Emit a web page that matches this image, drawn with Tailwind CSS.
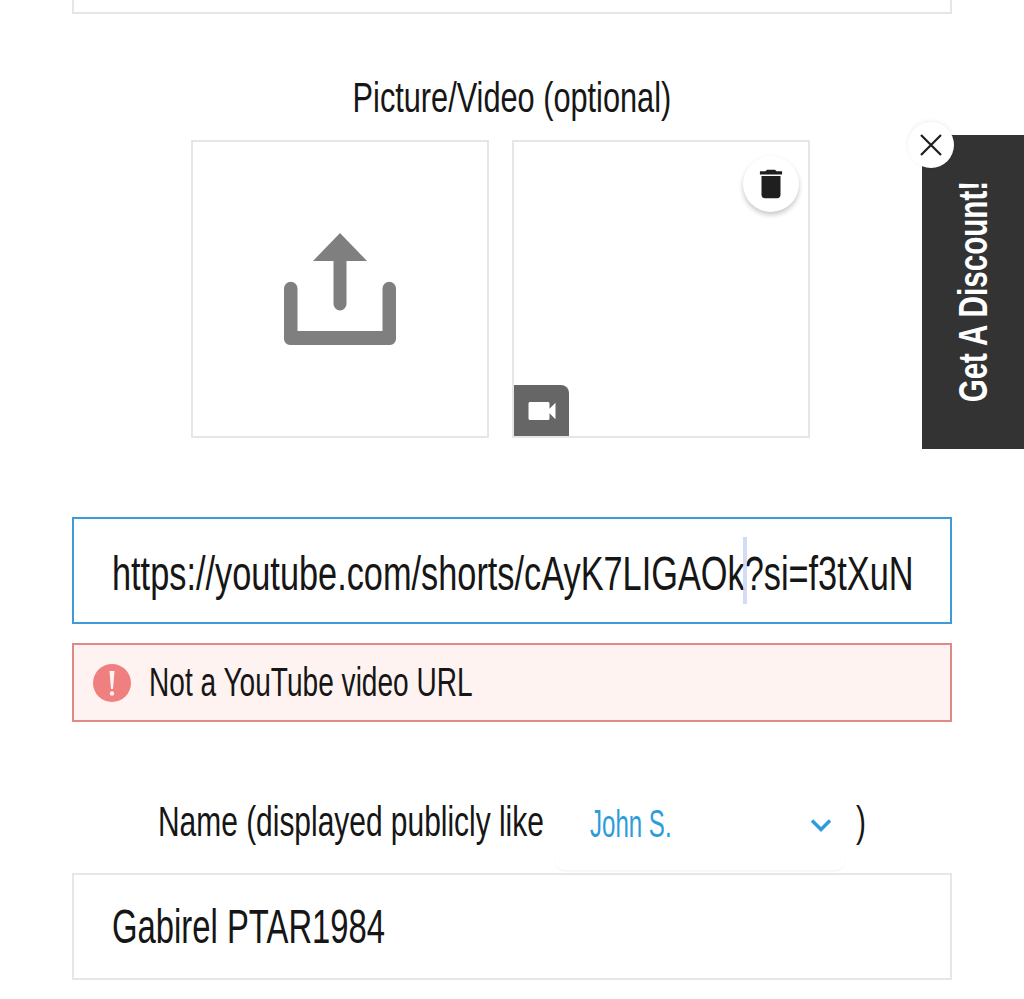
<!DOCTYPE html>
<html lang="en">
<head>
    <meta charset="UTF-8">
    <title>Picture/Video form</title>
    <script src="https://cdn.jsdelivr.net/npm/@tailwindcss/browser@4"></script>
</head>
<body class="bg-white">
    <div class="relative h-[999px] w-[1024px] overflow-hidden font-['Liberation_Sans',sans-serif] text-[#161616]">
        <div class="px-[72px]">
            <!-- Previous field, cut off by the top of the screen -->
            <div class="h-[14px] border-x-2 border-b-2 border-[#e4e6e8]"></div>

            <!-- Picture / video -->
            <div class="mt-[57px] flex h-[52px] items-center justify-center text-[42px] whitespace-nowrap">
                <span class="inline-block scale-x-[.731]">Picture/Video (optional)</span>
            </div>
            <div class="mt-[17px] ml-[119px] flex gap-[23px]">
                <div class="flex h-[298px] w-[298px] items-center justify-center border-2 border-[#e6e6e6]">
                    <svg class="h-[112px] w-[112px]" viewBox="0 0 112 112" fill="#7f7f7f">
                        <path d="M56 0 83 28H62.500V71a6.500 6.500 0 0 1-13 0V28H29Z"/>
                        <path d="M0 55.500a6.750 6.750 0 0 1 13.500 0V98H98.500V55.500a6.750 6.750 0 0 1 13.500 0V106a6 6 0 0 1-6 6H6a6 6 0 0 1-6-6Z"/>
                    </svg>
                </div>
                <div class="relative h-[298px] w-[298px] border-2 border-[#e6e6e6]">
                    <div class="absolute top-[14px] right-[9px] flex h-[56px] w-[56px] items-center justify-center rounded-full bg-white shadow-[0_3px_5px_rgba(0,0,0,.22)]">
                        <svg class="h-[38px] w-[38px]" viewBox="0 0 24 24" fill="#1f1f1f">
                            <path d="M6 19c0 1.100.9 2 2 2h8c1.100 0 2-.9 2-2V7H6v12zM19 4h-3.500l-1-1h-5l-1 1H5v2h14V4z"/>
                        </svg>
                    </div>
                    <div class="absolute bottom-0 left-0 flex h-[51px] w-[55px] items-center justify-center rounded-tr-[8px] bg-[#666666]">
                        <svg class="h-[36px] w-[36px]" viewBox="0 0 24 24" fill="#ffffff">
                            <path d="M17 10.500V7c0-.55-.45-1-1-1H4c-.55 0-1 .45-1 1v10c0 .55.45 1 1 1h12c.55 0 1-.45 1-1v-3.500l4 4v-11l-4 4z"/>
                        </svg>
                    </div>
                </div>
            </div>

            <!-- Video URL -->
            <div class="relative mt-[79px] flex h-[107px] items-center border-2 border-[#3d9bd9] pt-[6px] pl-[38px] text-[48px] whitespace-nowrap">
                <span class="inline-block origin-left scale-x-[.715]">https://youtube.com/shorts/cAyK7LIGAOk?si=f3tXuN</span>
                <div class="absolute top-[18px] left-[669px] h-[67px] w-[4px] bg-[#c9d3f2]/80"></div>
            </div>
            <div class="mt-[19px] flex h-[79px] items-center border-2 border-[#e08a84] bg-[#fef3f1] pl-[19px] text-[41px] whitespace-nowrap">
                <svg class="h-[38px] w-[38px] shrink-0" viewBox="0 0 38 38">
                    <circle cx="19" cy="19" r="19" fill="#f08080"/>
                    <path d="M16.500 7h5L20 25h-2Z" fill="#fef3f1"/>
                    <circle cx="19" cy="29.500" r="2.200" fill="#fef3f1"/>
                </svg>
                <span class="ml-[18px] inline-block origin-left scale-x-[.685]">Not a YouTube video URL</span>
            </div>

            <!-- Name -->
            <div class="relative mt-[71px] h-[60px] text-[42px] whitespace-nowrap">
                <span class="absolute top-[-3px] left-[86px] inline-block origin-left scale-x-[.7125]">Name (displayed publicly like</span>
                <div class="absolute top-0 left-[483px] flex h-[77px] w-[290px] items-center rounded-b-[10px] pr-[12px] pb-[14px] pl-[35px] text-[#2d9cdb] shadow-[0_2px_2px_rgba(0,0,0,.04)]">
                    <span class="inline-block origin-left scale-x-[.633] text-[38px]">John S.</span>
                    <svg class="ml-auto h-[14px] w-[24px]" viewBox="0 0 24 14" fill="none" stroke="#2d9cdb" stroke-width="3.500">
                        <path d="M3 2.500 12 11.500 21 2.500"/>
                    </svg>
                </div>
                <span class="absolute top-[-3px] left-[784px] inline-block origin-left scale-x-[.7125]">)</span>
            </div>
            <div class="mt-[20px] flex h-[107px] items-center border-2 border-[#e4e6e8] bg-white pl-[38px] text-[48px] whitespace-nowrap">
                <span class="inline-block origin-left scale-x-[.684]">Gabirel PTAR1984</span>
            </div>
        </div>

        <!-- Floating discount tab -->
        <div class="absolute top-[135px] left-[922px] flex h-[314px] w-[102px] items-center justify-center bg-[#333333]">
            <span class="rotate-180 scale-y-[.74] text-[40px] font-bold whitespace-nowrap text-white [writing-mode:vertical-rl]">Get A Discount!</span>
        </div>
        <div class="absolute top-[122px] left-[908px] flex h-[46px] w-[46px] items-center justify-center rounded-full bg-white shadow-[0_-1px_5px_rgba(0,0,0,.07)]">
            <svg class="h-[22px] w-[22px]" viewBox="0 0 22 22" stroke="#1c1c1c" stroke-width="2.200">
                <path d="M1 1 21 21M21 1 1 21"/>
            </svg>
        </div>
    </div>
</body>
</html>
